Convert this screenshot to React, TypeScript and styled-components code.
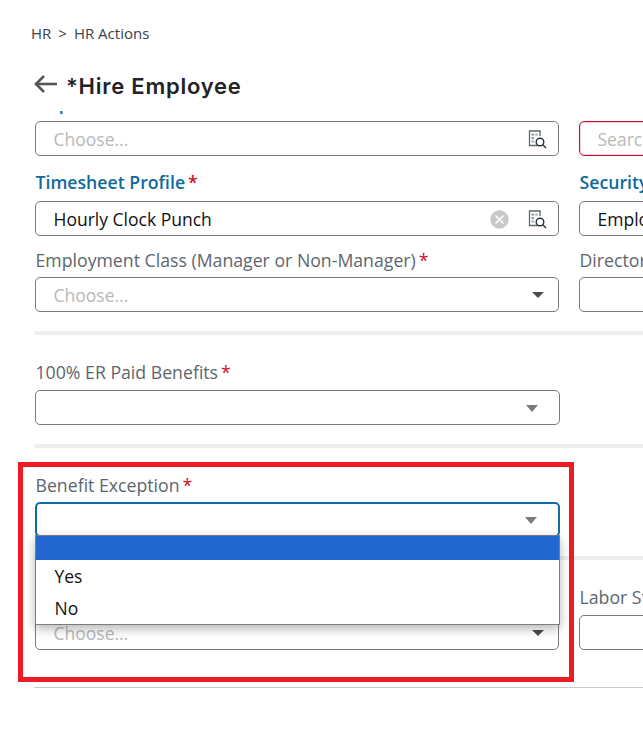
import React from 'react';
import styled, { createGlobalStyle } from 'styled-components';

const GlobalStyle = createGlobalStyle`
  html, body {
    margin: 0;
    padding: 0;
    background: #ffffff;
    overflow: hidden;
  }
  body {
    font-family: "Open Sans", "Liberation Sans", sans-serif;
  }
`;

const Page = styled.div`
  position: relative;
  width: 643px;
  height: 729px;
  overflow: hidden;
  background: #ffffff;
`;

const Breadcrumb = styled.nav`
  display: flex;
  gap: 7px;
  padding: 23px 0 0 31px;
  font-size: 15px;
  line-height: 20px;
  color: #3b424a;
`;

const TitleRow = styled.div`
  display: flex;
  align-items: center;
  gap: 9px;
  height: 34px;
  margin-top: 26px;
  padding-left: 33px;
`;

const Title = styled.h1`
  margin: 0;
  font-family: Inter, "Open Sans", sans-serif;
  font-size: 22px;
  font-weight: 600;
  color: #222326;
  letter-spacing: 0.75px;
`;

const Form = styled.div`
  height: 618px;
  margin-top: 8px;
  padding-left: 35px;
  overflow: hidden;
`;

const Row = styled.div<{ $top?: number }>`
  display: grid;
  grid-template-columns: 524px 524px;
  column-gap: 20px;
  margin-top: ${props => props.$top ?? 0}px;
`;

const Field = styled.div<{ $width?: number }>`
  position: relative;
  width: ${props => props.$width ?? 524}px;
`;

const Label = styled.div<{ $strong?: boolean; $gap?: number; $pull?: number }>`
  height: 22px;
  margin-top: ${props => props.$pull ?? 0}px;
  margin-bottom: ${props => props.$gap ?? 7}px;
  margin-left: 0.5px;
  font-size: 17.7px;
  line-height: 22px;
  white-space: nowrap;
  font-weight: ${props => (props.$strong ? 600 : 400)};
  color: ${props => (props.$strong ? '#0f6a9c' : '#5d666d')};
`;

const Required = styled.span`
  margin-left: 3px;
  color: #c8102e;
`;

const Control = styled.div<{ $focused?: boolean }>`
  box-sizing: border-box;
  display: flex;
  align-items: center;
  height: 35px;
  padding: 1px 11px 0 17.5px;
  border: ${props => (props.$focused ? '2px solid #0f6ea8' : '1px solid #7a7a7a')};
  border-radius: 5px;
  background: #ffffff;
  font-size: 17.5px;
  white-space: nowrap;
  color: #111111;
`;

const SearchControl = styled(Control)`
  && {
    border: 1px solid #c8102e;
    box-shadow: inset 0 0 0 1px rgba(200, 16, 46, 0.18);
  }
`;

const Placeholder = styled.span`
  flex: 1;
  color: #b8b8b8;
`;

const Value = styled.span`
  flex: 1;
`;

const Icons = styled.span`
  display: flex;
  align-items: center;
  gap: 19px;
  margin-left: auto;
`;

const Caret = styled.span<{ $light?: boolean }>`
  width: 0;
  height: 0;
  margin-left: auto;
  margin-right: ${props => (props.$light ? 10 : 3)}px;
  border-left: 6.5px solid transparent;
  border-right: 6.5px solid transparent;
  border-top: ${props => (props.$light ? '7px solid #7a7a7a' : '6px solid #4a4a4f')};
`;

const Divider = styled.div`
  height: 4px;
  width: 644px;
  margin: 19px 0 26px -1px;
  background: #eeefef;
`;

const BottomLine = styled.div`
  height: 1px;
  margin-top: 37px;
  margin-left: -1px;
  background: #c9c9c9;
`;

const Menu = styled.ul`
  position: absolute;
  left: 0;
  right: 0;
  top: 61px;
  z-index: 2;
  box-sizing: border-box;
  height: 90px;
  margin: 0;
  padding: 0;
  list-style: none;
  background: #ffffff;
  border: 1px solid #7d7d7d;
  box-shadow: 0 4px 10px rgba(0, 0, 0, 0.28);
  font-size: 17.5px;
  color: #111111;
`;

const MenuItem = styled.li<{ $selected?: boolean }>`
  box-sizing: border-box;
  height: ${props => (props.$selected ? 24 : 32)}px;
  padding-left: 18.5px;
  line-height: 32px;
  background: ${props => (props.$selected ? '#2268cf' : 'transparent')};
`;

const Annotation = styled.div`
  position: absolute;
  left: 18px;
  top: 462px;
  z-index: 3;
  box-sizing: border-box;
  width: 556px;
  height: 220px;
  border: 5px solid #ed1c24;
  pointer-events: none;
`;

const ArrowSvg = styled.svg`
  margin-top: -4px;
`;

function BackArrow() {
  return (
    <ArrowSvg width="24" height="20" viewBox="0 0 24 20" fill="none" stroke="#55565a" strokeWidth="2.6" strokeLinejoin="miter">
      <line x1="2" y1="10" x2="24" y2="10" />
      <polyline points="11,2 3,10 11,18" />
    </ArrowSvg>
  );
}

function LookupIcon() {
  return (
    <svg width="19" height="19" viewBox="0 0 19 19" fill="none">
      <path d="M10 15.5H1.5V1H12V6" stroke="#5b6b60" strokeWidth="1.3" />
      <rect x="3.5" y="3.5" width="2.6" height="2.2" fill="#8aa0b0" />
      <rect x="7.2" y="3.5" width="2.6" height="2.2" fill="#a9b5bd" />
      <rect x="3.5" y="7" width="2.6" height="2.2" fill="#8aa0b0" />
      <rect x="3.5" y="10.4" width="2.6" height="2.2" fill="#a9b5bd" />
      <circle cx="12" cy="12" r="3.8" stroke="#2c3138" strokeWidth="1.4" fill="#ffffff" />
      <line x1="14.8" y1="14.8" x2="18" y2="18" stroke="#2c3138" strokeWidth="1.5" />
    </svg>
  );
}

function ClearIcon() {
  return (
    <svg width="19" height="19" viewBox="0 0 19 19">
      <circle cx="9.5" cy="9.5" r="9.2" fill="#c9c9c9" />
      <path d="M5.5 5.5l8 8M13.5 5.5l-8 8" stroke="#ffffff" strokeWidth="1.6" />
    </svg>
  );
}

export default function App() {
  return (
    <Page>
      <GlobalStyle />
      <Breadcrumb>
        <span>HR</span>
        <span>&gt;</span>
        <span>HR Actions</span>
      </Breadcrumb>
      <TitleRow>
        <BackArrow />
        <Title>*Hire Employee</Title>
      </TitleRow>

      <Form>
        <Row>
          <Field>
            <Label $strong $pull={-19}>Department</Label>
            <Control>
              <Placeholder>Choose...</Placeholder>
              <Icons><LookupIcon /></Icons>
            </Control>
          </Field>
          <Field>
            <Label $pull={-19} />
            <SearchControl>
              <Placeholder>Search</Placeholder>
            </SearchControl>
          </Field>
        </Row>

        <Row $top={15}>
          <Field>
            <Label $strong $gap={8}>Timesheet Profile<Required>*</Required></Label>
            <Control>
              <Value>Hourly Clock Punch</Value>
              <Icons><ClearIcon /><LookupIcon /></Icons>
            </Control>
          </Field>
          <Field>
            <Label $strong $gap={8}>Security Role</Label>
            <Control><Value>Employee</Value></Control>
          </Field>
        </Row>

        <Row $top={13}>
          <Field>
            <Label $gap={6}>Employment Class (Manager or Non-Manager)<Required>*</Required></Label>
            <Control>
              <Placeholder>Choose...</Placeholder>
              <Caret />
            </Control>
          </Field>
          <Field>
            <Label $gap={6}>Director</Label>
            <Control />
          </Field>
        </Row>
        <Divider />

        <Field $width={525}>
          <Label>100% ER Paid Benefits<Required>*</Required></Label>
          <Control><Caret $light /></Control>
        </Field>
        <Divider />

        <Field $width={525}>
          <Label $gap={6}>Benefit Exception<Required>*</Required></Label>
          <Control $focused><Caret $light /></Control>
          <Menu>
            <MenuItem $selected />
            <MenuItem>Yes</MenuItem>
            <MenuItem>No</MenuItem>
          </Menu>
        </Field>
        <Divider />

        <Row>
          <Field>
            <Label />
            <Control>
              <Placeholder>Choose...</Placeholder>
              <Caret />
            </Control>
          </Field>
          <Field>
            <Label>Labor Status</Label>
            <Control />
          </Field>
        </Row>
        <BottomLine />
      </Form>

      <Annotation />
    </Page>
  );
}
